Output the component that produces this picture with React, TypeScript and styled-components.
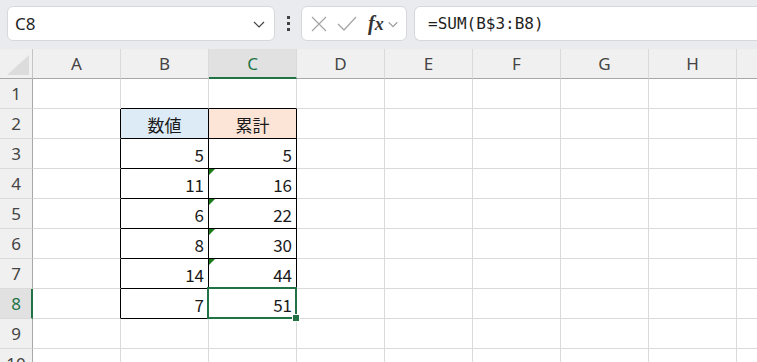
import styled, { createGlobalStyle, css } from "styled-components";

const GlobalStyle = createGlobalStyle`
    html, body {
        margin: 0;
        padding: 0;
        overflow: hidden;
        background: #ffffff;
    }
    * {
        box-sizing: border-box;
    }
`;

const columns = ["A", "B", "C", "D", "E", "F", "G", "H", ""];
const activeCol = "C";
const activeRow = 8;

type cellData = {
    text?: string;
    fill?: string;
    align?: "center" | "right";
    flag?: boolean;
};

// table contents, keyed by "B2" style addresses
const sheet: Record<string, cellData> = {
    B2: { text: "数値", fill: "#ddebf7", align: "center" },
    C2: { text: "累計", fill: "#fce4d6", align: "center" },
    B3: { text: "5" },
    C3: { text: "5" },
    B4: { text: "11" },
    C4: { text: "16", flag: true },
    B5: { text: "6" },
    C5: { text: "22", flag: true },
    B6: { text: "8" },
    C6: { text: "30", flag: true },
    B7: { text: "14" },
    C7: { text: "44", flag: true },
    B8: { text: "7" },
    C8: { text: "51" },
};

const inTable = (col: string, row: number) =>
    (col === "B" || col === "C") && row >= 2 && row <= 8;

function App() {
    const rows = Array.from({ length: 10 }, (_, i) => i + 1);
    return (
        <Page>
            <GlobalStyle />
            <Toolbar>
                <NameBox>
                    <span>C8</span>
                    <Chevron width="14" height="14" viewBox="0 0 14 14">
                        <path d="M2 5l5 5 5-5" />
                    </Chevron>
                </NameBox>
                <Dots>
                    <i />
                    <i />
                    <i />
                </Dots>
                <FormulaButtons>
                    <svg width="18" height="18" viewBox="0 0 18 18">
                        <path d="M2 2l14 14M16 2L2 16" stroke="#a6a6a6" strokeWidth="1.3" fill="none" />
                    </svg>
                    <svg width="20" height="18" viewBox="0 0 20 18">
                        <path d="M1 9l6 6L19 2" stroke="#a6a6a6" strokeWidth="1.3" fill="none" />
                    </svg>
                    <Fx>
                        f<em>x</em>
                    </Fx>
                    <Chevron width="12" height="12" viewBox="0 0 14 14" $small>
                        <path d="M2 5l5 5 5-5" />
                    </Chevron>
                </FormulaButtons>
                <FormulaInput>=SUM(B$3:B8)</FormulaInput>
            </Toolbar>
            <Grid>
                <Corner>
                    <svg width="22" height="20" viewBox="0 0 22 20">
                        <path d="M22 0V20H0Z" fill="#dcdcdc" />
                    </svg>
                </Corner>
                {columns.map((c, i) => (
                    <ColHead key={"h" + i} $active={c === activeCol}>
                        {c}
                    </ColHead>
                ))}
                {rows.map((r) => (
                    <Row key={r} r={r} />
                ))}
            </Grid>
        </Page>
    );
}

function Row({ r }: { r: number }) {
    return (
        <>
            <RowHead $active={r === activeRow}>{r}</RowHead>
            {columns.map((c, i) => {
                const addr = c + r;
                const data = sheet[addr];
                const boxed = inTable(c, r);
                const nextCol = columns[i + 1];
                return (
                    <Cell
                        key={addr + i}
                        $fill={data?.fill}
                        $align={data?.align ?? "right"}
                        $edgeRight={boxed || (nextCol !== undefined && inTable(nextCol, r))}
                        $edgeBottom={boxed || inTable(c, r + 1)}
                        $flag={data?.flag}
                        $selected={c === activeCol && r === activeRow}
                    >
                        {data?.text}
                    </Cell>
                );
            })}
        </>
    );
}

export default App;

const Page = styled.div`
    width: 757px;
    height: 362px;
    overflow: hidden;
    font-family: "Noto Sans", "Noto Sans CJK JP", sans-serif;
`;

const Toolbar = styled.div`
    height: 49px;
    background: #e9ebee;
    display: flex;
    align-items: center;
    padding: 0 0 2px 7px;
`;

const NameBox = styled.div`
    width: 268px;
    height: 35px;
    background: #ffffff;
    border: 1px solid #d6d8db;
    border-radius: 6px;
    display: flex;
    align-items: center;
    justify-content: space-between;
    padding: 0 8px 0 7px;
    font-family: "Noto Sans", sans-serif;
    font-size: 17px;
    color: #242424;
`;

const Chevron = styled.svg<{ $small?: boolean }>`
    fill: none;
    stroke: ${(p) => (p.$small ? "#8a8a8a" : "#424242")};
    stroke-width: 1.2;
`;

const Dots = styled.div`
    width: 26px;
    display: flex;
    flex-direction: column;
    align-items: center;
    gap: 3px;
    i {
        width: 3px;
        height: 3px;
        background: #424242;
    }
`;

const FormulaButtons = styled.div`
    width: 106px;
    height: 35px;
    background: #ffffff;
    border: 1px solid #d6d8db;
    border-radius: 6px;
    display: flex;
    align-items: center;
    gap: 9px;
    padding: 0 4px 0 8px;
    svg:nth-child(2) {
        margin-right: 2px;
    }
`;

const Fx = styled.span`
    font-family: "Liberation Serif", "DejaVu Serif", serif;
    font-style: italic;
    font-weight: bold;
    font-size: 20px;
    color: #333333;
    margin-right: -6px;
    em {
        font-style: italic;
        font-size: 18px;
    }
`;

const FormulaInput = styled.div`
    flex: 1;
    margin-left: 7px;
    height: 35px;
    background: #ffffff;
    border: 1px solid #d6d8db;
    border-right: none;
    border-radius: 6px 0 0 6px;
    display: flex;
    align-items: center;
    padding-left: 13px;
    font-family: "DejaVu Sans Mono", "Liberation Mono", monospace;
    font-size: 16px;
    color: #1f1f1f;
`;

const Grid = styled.div`
    display: grid;
    grid-template-columns: 33px repeat(9, 88px);
    grid-auto-rows: 30px;
`;

const headBase = css`
    background: #f0f0f0;
    color: #444444;
    font-family: "Noto Sans", sans-serif;
    font-size: 17px;
    display: flex;
    align-items: center;
    justify-content: center;
`;

const Corner = styled.div`
    ${headBase};
    border-right: 1px solid #c4c4c4;
    border-bottom: 1px solid #a8a8a8;
    align-items: flex-end;
    justify-content: flex-end;
    padding: 0 3px 3px 0;
`;

const ColHead = styled.div<{ $active?: boolean }>`
    ${headBase};
    border-right: 1px solid #dadada;
    border-bottom: ${(p) => (p.$active ? "2px solid #217346" : "1px solid #a8a8a8")};
    background: ${(p) => (p.$active ? "#e1e1e1" : "#f0f0f0")};
    color: ${(p) => (p.$active ? "#217346" : "#444444")};
    padding-top: ${(p) => (p.$active ? "1px" : "0")};
`;

const RowHead = styled.div<{ $active?: boolean }>`
    ${headBase};
    border-bottom: 1px solid #dadada;
    border-right: ${(p) => (p.$active ? "2px solid #217346" : "1px solid #a8a8a8")};
    background: ${(p) => (p.$active ? "#e1e1e1" : "#f0f0f0")};
    color: ${(p) => (p.$active ? "#217346" : "#444444")};
    padding-left: ${(p) => (p.$active ? "1px" : "0")};
`;

const Cell = styled.div<{
    $fill?: string;
    $align: "center" | "right";
    $edgeRight?: boolean;
    $edgeBottom?: boolean;
    $flag?: boolean;
    $selected?: boolean;
}>`
    position: relative;
    z-index: ${(p) => (p.$selected ? 2 : "auto")};
    background: ${(p) => p.$fill ?? "#ffffff"};
    border-right: 1px solid ${(p) => (p.$edgeRight ? "#000000" : "#dadada")};
    border-bottom: 1px solid ${(p) => (p.$edgeBottom ? "#000000" : "#dadada")};
    display: flex;
    align-items: center;
    justify-content: ${(p) => (p.$align === "center" ? "center" : "flex-end")};
    padding: 2px 4px 0 4px;
    font-family: "Noto Sans CJK JP", sans-serif;
    font-size: 17px;
    color: #1a1a1a;

    ${(p) =>
        p.$flag &&
        css`
            &::before {
                content: "";
                position: absolute;
                left: 0;
                top: 0;
                border-top: 6px solid #1b7a1b;
                border-right: 6px solid transparent;
            }
        `}

    ${(p) =>
        p.$selected &&
        css`
            &::after {
                content: "";
                position: absolute;
                left: -2px;
                top: -2px;
                right: -1px;
                bottom: -1px;
                border: 2px solid #217346;
                pointer-events: none;
            }
            &::before {
                content: "";
                position: absolute;
                right: -4px;
                bottom: -4px;
                width: 6px;
                height: 6px;
                background: #217346;
                border: 1px solid #ffffff;
                box-sizing: content-box;
                z-index: 2;
            }
        `}
`;
